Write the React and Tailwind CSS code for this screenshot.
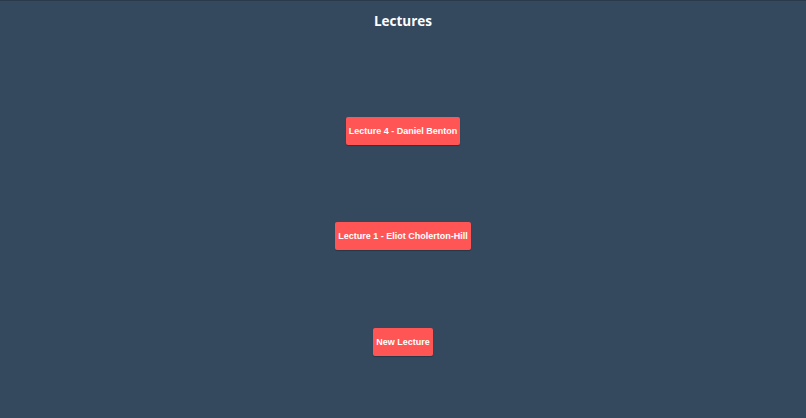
import React from "react";

const btn =
  "bg-[#ff5555] text-white font-bold text-[9px] leading-[11px] rounded-[2px] px-[3px] h-[28px] flex items-center shadow-[0_1px_1px_rgba(0,0,0,0.25)]";

export default function App() {
  return (
    <div
      className="w-[806px] h-[418px] bg-[#35495e] border-t border-[#2a3a4b] flex flex-col items-center"
      style={{ fontFamily: "'Liberation Sans', Arial, sans-serif" }}
    >
      <h1
        className="mt-[9px] text-[13.5px] leading-[22px] font-bold text-white"
        style={{ fontFamily: "'Open Sans', sans-serif" }}
      >
        Lectures
      </h1>
      <button className={btn + " mt-[85px]"}>Lecture 4 - Daniel Benton</button>
      <button className={btn + " mt-[77px]"}>Lecture 1 - Eliot Cholerton-Hill</button>
      <button className={btn + " mt-[78px]"}>New Lecture</button>
    </div>
  );
}
